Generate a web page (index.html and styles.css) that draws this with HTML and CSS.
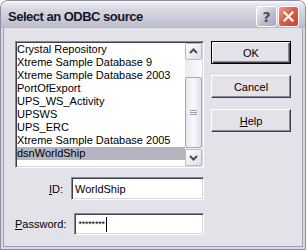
FILE: index.html
```html
<!DOCTYPE html>
<html>
<head>
<meta charset="utf-8">
<link rel="stylesheet" href="styles.css">
</head>
<body>
<div class="window">
  <div class="titlebar">
    <span class="title">Select an ODBC source</span>
    <div class="tb-btns">
      <span class="tb help">?</span>
      <span class="tb close"><svg width="13" height="13" viewBox="0 0 13 13"><path d="M2.5 2.5 L10.5 10.5 M10.5 2.5 L2.5 10.5" stroke="#fff" stroke-width="2.2" stroke-linecap="square"/></svg></span>
    </div>
  </div>
  <div class="frame">
    <div class="body">
      <div class="left">
        <div class="listbox">
          <ul class="items">
            <li>Crystal Repository</li>
            <li>Xtreme Sample Database 9</li>
            <li>Xtreme Sample Database 2003</li>
            <li>PortOfExport</li>
            <li>UPS_WS_Activity</li>
            <li>UPSWS</li>
            <li>UPS_ERC</li>
            <li>Xtreme Sample Database 2005</li>
            <li class="selected">dsnWorldShip</li>
          </ul>
          <div class="scrollbar">
            <div class="sb-btn"><svg width="15" height="15" viewBox="0 0 15 15"><path d="M4 9 L7.5 5.5 L11 9" fill="none" stroke="#4a4a5c" stroke-width="2"/></svg></div>
            <div class="track">
              <div class="thumb"><svg width="7" height="6" viewBox="0 0 7 6"><path d="M0 0.5 H7 M0 2.5 H7 M0 4.5 H7" stroke="#9a9ab0" stroke-width="1"/></svg></div>
            </div>
            <div class="sb-btn"><svg width="15" height="15" viewBox="0 0 15 15"><path d="M4 6 L7.5 9.5 L11 6" fill="none" stroke="#4a4a5c" stroke-width="2"/></svg></div>
          </div>
        </div>
        <div class="field id">
          <label class="lbl"><u>I</u>D:</label>
          <div class="input">WorldShip</div>
        </div>
        <div class="field pw">
          <label class="lbl"><u>P</u>assword:</label>
          <div class="input"><span class="stars">********</span><span class="caret"></span></div>
        </div>
      </div>
      <div class="right">
        <div class="btn default">OK</div>
        <div class="btn">Cancel</div>
        <div class="btn"><u>H</u>elp</div>
      </div>
    </div>
  </div>
</div>
</body>
</html>
```
FILE: styles.css
```css
html, body {
  margin: 0;
  padding: 0;
  background: #ffffff;
}
.window {
  width: 306px;
  height: 250px;
  display: flex;
  flex-direction: column;
  border-radius: 7px 7px 0 0;
  overflow: hidden;
  font-family: "Liberation Sans", Arial, sans-serif;
  font-size: 11px;
  color: #000;
}
.titlebar {
  height: 28px;
  flex: none;
  box-sizing: border-box;
  padding: 4px 6px 0 7px;
  display: flex;
  align-items: center;
  background: linear-gradient(#fbfbfd 0, #e6e6ee 3px, #d6d6e0 9px, #cbcbd7 18px, #bdbdcb 26px, #a9a9ba 28px);
  border: 1px solid #8e8ea2;
  border-bottom: none;
  border-radius: 7px 7px 0 0;
}
.title {
  flex: 1;
  font-weight: bold;
  font-size: 13px;
  color: #15152a;
  letter-spacing: -0.5px;
}
.tb-btns {
  display: flex;
  gap: 1px;
}
.tb {
  width: 21px;
  height: 21px;
  box-sizing: border-box;
  border: 1px solid #ffffff;
  border-radius: 3px;
  display: flex;
  align-items: center;
  justify-content: center;
}
.help {
  background: linear-gradient(135deg, #f0f0f6, #bcbccf 60%, #a8a8be);
  color: #4a4a60;
  font-weight: bold;
  font-size: 14px;
  font-family: "DejaVu Sans", sans-serif;
}
.close {
  background: linear-gradient(135deg, #f0a090, #d8614c 45%, #c04834);
}
.frame {
  flex: 1;
  display: flex;
  background: #d9d9e3;
  border: 1px solid #8e8ea2;
  border-top: none;
  padding: 0 2px 2px;
}
.body {
  flex: 1;
  display: flex;
  gap: 7px;
  background: #e4e2e9;
  border: 1px solid #a0a0b2;
  border-top: none;
  padding: 13px 0 0 11px;
}
.left {
  width: 189px;
  display: flex;
  flex-direction: column;
}
.listbox {
  height: 127px;
  box-sizing: border-box;
  display: flex;
  background: #fff;
  border: 1px solid;
  border-color: #8a8a96 #ffffff #ffffff #8a8a96;
  padding: 1px;
  box-shadow: inset 1px 1px #404048, inset -1px -1px #d8d6de;
}
.items {
  flex: 1;
  list-style: none;
  margin: 0;
  padding: 0;
}
.items li {
  height: 13px;
  line-height: 13px;
  white-space: nowrap;
  padding-left: 0;
}
.items li.selected {
  background: #b6b5bf;
}
.scrollbar {
  width: 17px;
  display: flex;
  flex-direction: column;
  background: #f4f4f7;
}
.sb-btn {
  height: 17px;
  box-sizing: border-box;
  border: 1px solid #b8b8c8;
  border-radius: 2px;
  background: linear-gradient(135deg, #ffffff, #dcdce6);
  display: flex;
  align-items: center;
  justify-content: center;
}
.track {
  flex: 1;
  padding: 17px 0 1px;
  display: flex;
  flex-direction: column;
  background: linear-gradient(90deg, #ececf0, #fbfbfc);
}
.thumb {
  flex: 1;
  box-sizing: border-box;
  border: 1px solid #a8a8ba;
  border-radius: 2px;
  background: linear-gradient(90deg, #e6e6ee, #fafafd 50%, #dedee8);
  display: flex;
  align-items: center;
  justify-content: center;
}
.field {
  display: flex;
  align-items: center;
  justify-content: flex-end;
  gap: 8px;
}
.field.id {
  margin-top: 9px;
}
.field.pw {
  margin-top: 13px;
}
.lbl {
  white-space: nowrap;
}
.input {
  width: 133px;
  height: 23px;
  box-sizing: border-box;
  background: #fff;
  border: 1px solid;
  border-color: #8a8a96 #ffffff #ffffff #8a8a96;
  box-shadow: inset 1px 1px #404048, inset -1px -1px #d8d6de;
  padding-left: 3px;
  display: flex;
  align-items: center;
}
.field.pw .input {
  height: 22px;
}
.stars {
  font-size: 9px;
  letter-spacing: -0.2px;
  line-height: 9px;
}
.caret {
  width: 1px;
  height: 15px;
  background: #000;
  margin-left: 1px;
}
.right {
  width: 80px;
  display: flex;
  flex-direction: column;
  gap: 11px;
}
.btn {
  height: 23px;
  box-sizing: border-box;
  display: flex;
  align-items: center;
  justify-content: center;
  background: #e4e2e9;
  border: 1px solid;
  border-color: #ffffff #404048 #404048 #ffffff;
  box-shadow: inset -1px -1px #8a8a96;
}
.btn.default {
  border: 1px solid #000;
  box-shadow: inset 1px 1px #fff, inset -1px -1px #404048, inset -2px -2px #8a8a96;
}
```
